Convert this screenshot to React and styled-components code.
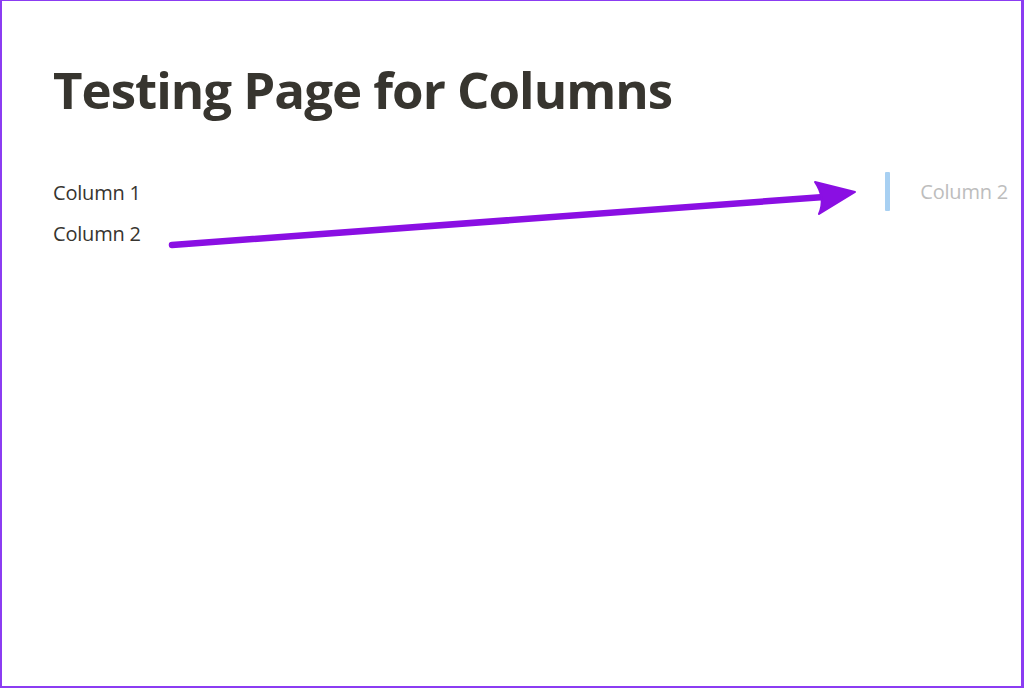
import React from "react";
import styled, { createGlobalStyle } from "styled-components";

const GlobalStyle = createGlobalStyle`
  html, body {
    margin: 0;
    padding: 0;
    background: #ffffff;
  }
  body {
    font-family: "Open Sans", "Noto Sans", "Liberation Sans", sans-serif;
  }
`;

const Frame = styled.div`
  position: relative;
  box-sizing: border-box;
  width: 1024px;
  height: 688px;
  border: 2px solid #8b3cf2;
  border-top-width: 1px;
  border-right-width: 3px;
  padding: 57px 13px 0 51px;
  display: flex;
  flex-direction: column;
  overflow: hidden;
`;

const Title = styled.h1`
  margin: 0;
  font-size: 51px;
  line-height: 62px;
  font-weight: 700;
  color: #37352f;
  letter-spacing: -1px;
`;

const ColumnsRow = styled.div`
  margin-top: 58px;
  display: flex;
  justify-content: space-between;
  align-items: flex-start;
`;

const BlockList = styled.div`
  display: flex;
  flex-direction: column;
  gap: 11px;
`;

const Block = styled.div`
  font-size: 20px;
  line-height: 30px;
  letter-spacing: -0.2px;
  color: ${(p) => (p.$ghost ? "#bdbdbd" : "#37352f")};
`;

const DropTarget = styled.div`
  display: flex;
  align-items: center;
  gap: 30px;
  margin-top: -6px;
`;

const DropBar = styled.div`
  width: 5px;
  height: 39px;
  border-radius: 1px;
  background: #a8d0f2;
`;

const Annotation = styled.svg`
  position: absolute;
  left: 0;
  top: 0;
  pointer-events: none;
`;

export default function App() {
  return (
    <>
      <GlobalStyle />
      <Frame>
        <Title>Testing Page for Columns</Title>
        <ColumnsRow>
          <BlockList>
            <Block>Column 1</Block>
            <Block>Column 2</Block>
          </BlockList>
          <DropTarget>
            <DropBar />
            <Block $ghost>Column 2</Block>
          </DropTarget>
        </ColumnsRow>
        <Annotation width="1024" height="688" viewBox="0 0 1024 688">
          <line
            x1="170"
            y1="244"
            x2="822"
            y2="196"
            stroke="#8a0fe3"
            strokeWidth="6.5"
            strokeLinecap="round"
          />
          <path
            d="M813 181 L853 191 L817 213 Q824 197 813 181 Z"
            fill="#8a0fe3"
            stroke="#8a0fe3"
            strokeWidth="2"
            strokeLinejoin="round"
          />
        </Annotation>
      </Frame>
    </>
  );
}
